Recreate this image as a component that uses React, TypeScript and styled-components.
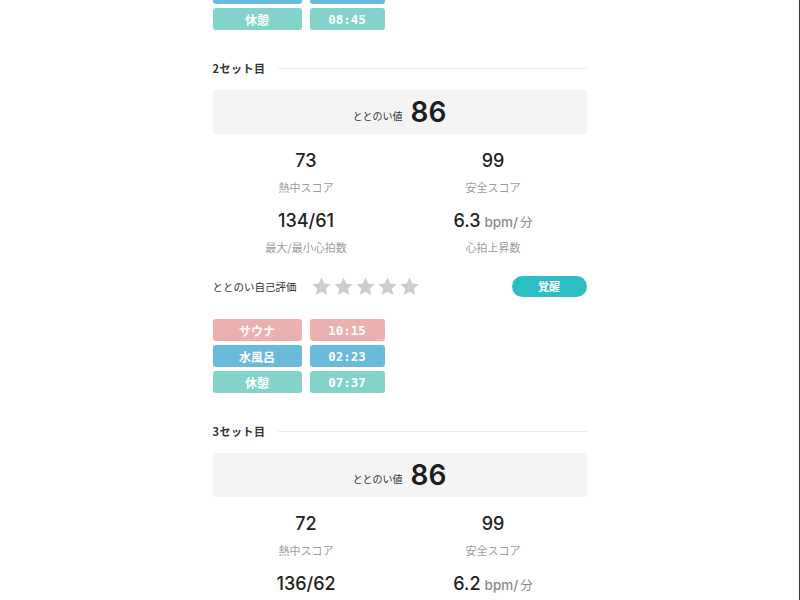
import * as React from 'react';
import styled, { createGlobalStyle } from 'styled-components';

const GlobalStyle = createGlobalStyle`
  html, body {
    margin: 0;
    padding: 0;
    background: #fff;
  }
  body {
    font-family: "Noto Sans CJK JP", "Noto Sans", sans-serif;
    color: #222;
  }
`;

type Phase = 'sauna' | 'water' | 'rest';

interface SetData {
  no: number;
  totonoi: number;
  heat: number;
  safety: number;
  maxMin: string;
  rise: string;
  mood: string;
  phases: { kind: Phase; label: string; time: string }[];
}

const phaseColor: Record<Phase, string> = {
  sauna: '#ebb0b0',
  water: '#69badb',
  rest: '#84d3cb',
};

const sets: SetData[] = [
  {
    no: 2,
    totonoi: 86,
    heat: 73,
    safety: 99,
    maxMin: '134/61',
    rise: '6.3',
    mood: '覚醒',
    phases: [
      { kind: 'sauna', label: 'サウナ', time: '10:15' },
      { kind: 'water', label: '水風呂', time: '02:23' },
      { kind: 'rest', label: '休憩', time: '07:37' },
    ],
  },
  {
    no: 3,
    totonoi: 86,
    heat: 72,
    safety: 99,
    maxMin: '136/62',
    rise: '6.2',
    mood: '覚醒',
    phases: [
      { kind: 'sauna', label: 'サウナ', time: '09:50' },
      { kind: 'water', label: '水風呂', time: '02:10' },
      { kind: 'rest', label: '休憩', time: '08:02' },
    ],
  },
];

const prevPhases = [
  { kind: 'sauna' as Phase, label: 'サウナ', time: '09:30' },
  { kind: 'water' as Phase, label: '水風呂', time: '02:05' },
  { kind: 'rest' as Phase, label: '休憩', time: '08:45' },
];

const Frame = styled.div`
  width: 800px;
  height: 600px;
  overflow: hidden;
  box-sizing: border-box;
  border-right: 1px solid #3c3c3c;
  box-shadow: inset -7px 0 0 -6px #f0f0f0;
`;

// the page is scrolled: the first set's tag list sits partly above the top edge
const Column = styled.div`
  width: 374px;
  margin: -44px auto 0;
`;

const TagList = styled.div`
  display: grid;
  grid-template-columns: 89px 75px;
  column-gap: 8px;
  row-gap: 4px;
`;

const Tag = styled.div<{ $kind: Phase; $mono?: boolean }>`
  height: 22px;
  border-radius: 3px;
  background: ${(p) => phaseColor[p.$kind]};
  color: #fff;
  display: flex;
  align-items: center;
  justify-content: center;
  font-size: ${(p) => (p.$mono ? '12.5px' : '12px')};
  font-weight: 700;
  font-family: ${(p) =>
    p.$mono ? '"DejaVu Sans Mono", "Liberation Mono", monospace' : '"Noto Sans CJK JP", sans-serif'};
`;

const Section = styled.section`
  padding-top: 28px;
`;

const SetHeading = styled.div`
  display: flex;
  align-items: center;
  gap: 12px;
  font-size: 11px;
  font-weight: 700;
  color: #333;
  letter-spacing: 0.5px;
  height: 20px;

  &::after {
    content: '';
    flex: 1;
    height: 1px;
    background: #ececec;
  }
`;

const TotonoiBox = styled.div`
  margin-top: 12px;
  height: 44px;
  background: #f4f4f4;
  border-radius: 2px;
  display: flex;
  align-items: center;
  justify-content: center;
  gap: 8px;
`;

const TotonoiLabel = styled.span`
  font-size: 10px;
  color: #333;
  margin-top: 6px;
`;

const TotonoiValue = styled.span`
  font-family: Inter, "Liberation Sans", sans-serif;
  font-size: 28px;
  font-weight: 600;
  color: #1e1e1e;
`;

const StatGrid = styled.div`
  display: grid;
  grid-template-columns: 1fr 1fr;
  row-gap: 14px;
  margin-top: 15px;
`;

const Stat = styled.div`
  display: flex;
  flex-direction: column;
  align-items: center;
`;

const StatValue = styled.div`
  font-family: Inter, "Liberation Sans", sans-serif;
  font-size: 18px;
  font-weight: 500;
  color: #222;
  height: 24px;
  line-height: 24px;
`;

const Unit = styled.span`
  font-size: 13.5px;
  color: #8a8a8a;
  margin-left: 4px;
  font-weight: 500;
`;

const UnitJa = styled.span`
  font-family: "Noto Sans CJK JP", sans-serif;
  font-weight: 400;
  font-size: 12.5px;
  margin-left: 2px;
`;

const StatLabel = styled.div`
  font-size: 11px;
  color: #9d9d9d;
  margin-top: 6px;
  line-height: 16px;
`;

const RatingRow = styled.div`
  display: flex;
  align-items: center;
  margin-top: 20px;
  height: 22px;
`;

const RatingLabel = styled.span`
  font-size: 10.5px;
  color: #333;
  width: 98px;
`;

const Stars = styled.div`
  display: flex;
  gap: 1px;
  flex: 1;
`;

const MoodButton = styled.div`
  width: 75px;
  height: 21px;
  border-radius: 11px;
  background: #2bbfc4;
  color: #fff;
  font-size: 11px;
  font-weight: 700;
  display: flex;
  align-items: center;
  justify-content: center;
`;

const SetTags = styled(TagList)`
  margin-top: 22px;
`;

function Star() {
  return (
    <svg width="21" height="21" viewBox="0 0 24 24">
      <path
        d="M12 1.8l3.1 6.9 7.4.7-5.6 5 1.7 7.4L12 18l-6.6 3.8 1.7-7.4-5.6-5 7.4-.7z"
        fill="#cdcdcd"
      />
    </svg>
  );
}

function Phases({ phases, as: Wrap = TagList }: { phases: SetData['phases']; as?: typeof TagList }) {
  return (
    <Wrap>
      {phases.map((p) => (
        <React.Fragment key={p.kind}>
          <Tag $kind={p.kind}>{p.label}</Tag>
          <Tag $kind={p.kind} $mono>
            {p.time}
          </Tag>
        </React.Fragment>
      ))}
    </Wrap>
  );
}

function SetCard({ data }: { data: SetData }) {
  return (
    <Section>
      <SetHeading>{data.no}セット目</SetHeading>
      <TotonoiBox>
        <TotonoiLabel>ととのい値</TotonoiLabel>
        <TotonoiValue>{data.totonoi}</TotonoiValue>
      </TotonoiBox>
      <StatGrid>
        <Stat>
          <StatValue>{data.heat}</StatValue>
          <StatLabel>熱中スコア</StatLabel>
        </Stat>
        <Stat>
          <StatValue>{data.safety}</StatValue>
          <StatLabel>安全スコア</StatLabel>
        </Stat>
        <Stat>
          <StatValue>{data.maxMin}</StatValue>
          <StatLabel>最大/最小心拍数</StatLabel>
        </Stat>
        <Stat>
          <StatValue>
            {data.rise}
            <Unit>
              bpm/<UnitJa>分</UnitJa>
            </Unit>
          </StatValue>
          <StatLabel>心拍上昇数</StatLabel>
        </Stat>
      </StatGrid>
      <RatingRow>
        <RatingLabel>ととのい自己評価</RatingLabel>
        <Stars>
          {[0, 1, 2, 3, 4].map((i) => (
            <Star key={i} />
          ))}
        </Stars>
        <MoodButton>{data.mood}</MoodButton>
      </RatingRow>
      <Phases phases={data.phases} as={SetTags} />
    </Section>
  );
}

export default function App() {
  return (
    <Frame>
      <GlobalStyle />
      <Column>
        <Phases phases={prevPhases} />
        {sets.map((s) => (
          <SetCard key={s.no} data={s} />
        ))}
      </Column>
    </Frame>
  );
}
